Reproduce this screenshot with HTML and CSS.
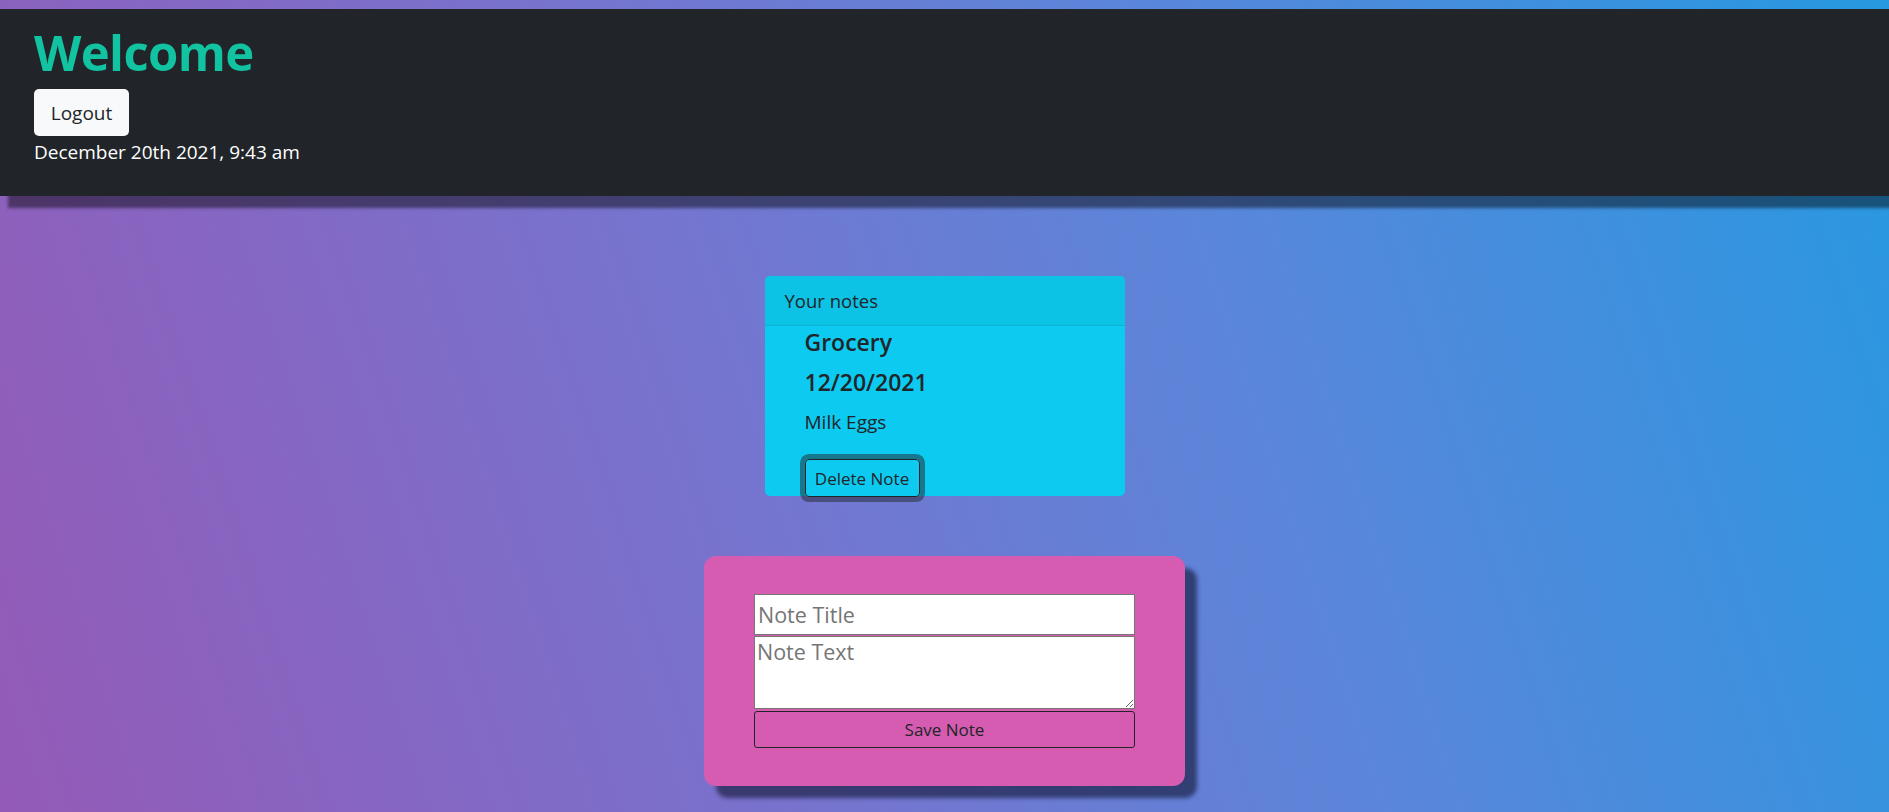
FILE: index.html
```html
<!DOCTYPE html>
<html lang="en">
<head>
<meta charset="utf-8">
<title>Notes</title>
<link rel="stylesheet" href="styles.css">
</head>
<body>
<header class="topbar">
  <h1 class="welcome">Welcome</h1>
  <button class="btn-logout">Logout</button>
  <div class="date">December 20th 2021, 9:43 am</div>
</header>
<main class="main">
  <section class="notes-card">
    <div class="notes-header">Your notes</div>
    <ul class="notes-list">
      <li class="note">
        <div class="note-title">Grocery</div>
        <div class="note-date">12/20/2021</div>
        <div class="note-text">Milk Eggs</div>
        <button class="btn-delete">Delete Note</button>
      </li>
    </ul>
  </section>
  <form class="note-form">
    <input class="field-title" type="text" placeholder="Note Title">
    <textarea class="field-text" placeholder="Note Text"></textarea>
    <button type="button" class="btn-save">Save Note</button>
  </form>
</main>
</body>
</html>
```
FILE: styles.css
```css
html, body {
  margin: 0;
  padding: 0;
}
body {
  min-height: 812px;
  font-family: "Open Sans", "Noto Sans", sans-serif;
  color: #212529;
  background: linear-gradient(72deg, #945ab7 0%, #7575cf 40%, #5a86da 65%, #2699e1 100%);
  overflow: hidden;
}
.topbar {
  margin-top: 9px;
  height: 187px;
  box-sizing: border-box;
  background: #212529;
  padding: 14px 34px 0;
  box-shadow: 8px 12px 3px rgba(0, 0, 0, 0.45);
  display: flex;
  flex-direction: column;
  align-items: flex-start;
}
.welcome {
  margin: 0;
  font-size: 49px;
  font-weight: 700;
  line-height: 58px;
  color: #11c3a0;
  letter-spacing: -0.6px;
}
.btn-logout {
  margin-top: 8px;
  width: 95px;
  height: 47px;
  border: 0;
  border-radius: 5px;
  background: #f8f9fa;
  color: #212529;
  font-family: inherit;
  font-size: 19px;
  padding: 0;
}
.date {
  margin-top: 4px;
  color: #ffffff;
  font-size: 19px;
  line-height: 24px;
}
.main {
  display: flex;
  flex-direction: column;
  align-items: center;
  padding-top: 80px;
}
.notes-card {
  width: 360px;
  height: 220px;
  background: #0dcaf0;
  border-radius: 5px;
  box-sizing: border-box;
}
.notes-header {
  height: 50px;
  box-sizing: border-box;
  padding: 0 20px;
  display: flex;
  align-items: center;
  background: #0cc2e5;
  border-bottom: 1px solid rgba(0, 0, 0, 0.08);
  border-radius: 5px 5px 0 0;
  font-size: 18.5px;
}
.notes-list {
  list-style: none;
  margin: -4px 0 0;
  padding: 0 0 0 40px;
}
.note {
  display: flex;
  flex-direction: column;
  align-items: flex-start;
}
.note-title, .note-date {
  font-size: 23px;
  font-weight: 600;
  line-height: 40px;
}
.note-text {
  font-size: 19px;
  line-height: 40px;
}
.btn-delete {
  margin-top: 17px;
  width: 115px;
  height: 38px;
  padding: 0;
  background: transparent;
  border: 1px solid #212529;
  border-radius: 4px;
  font-family: inherit;
  font-size: 17px;
  color: #212529;
  box-shadow: 0 0 0 5px rgba(33, 37, 41, 0.5);
}
.note-form {
  margin-top: 60px;
  width: 481px;
  box-sizing: border-box;
  padding: 38px 50px;
  background: #d55cb0;
  border-radius: 12px;
  box-shadow: 12px 12px 4px rgba(15, 20, 50, 0.6);
  display: flex;
  flex-direction: column;
}
.field-title {
  height: 41px;
  box-sizing: border-box;
  margin: 0;
  border: 1px solid #767676;
  padding: 0 3px;
  font-family: inherit;
  font-size: 21.5px;
  background: #fff;
}
.field-text {
  margin: 1px 0 0;
  height: 73px;
  box-sizing: border-box;
  border: 1px solid #767676;
  padding: 0 2px;
  font-family: inherit;
  font-size: 21.5px;
  background: #fff;
}
.field-title::placeholder, .field-text::placeholder {
  color: #757575;
}
.btn-save {
  margin-top: 2px;
  height: 37px;
  padding: 0;
  background: transparent;
  border: 1px solid #212529;
  border-radius: 3px;
  font-family: inherit;
  font-size: 17px;
  color: #212529;
}
```
